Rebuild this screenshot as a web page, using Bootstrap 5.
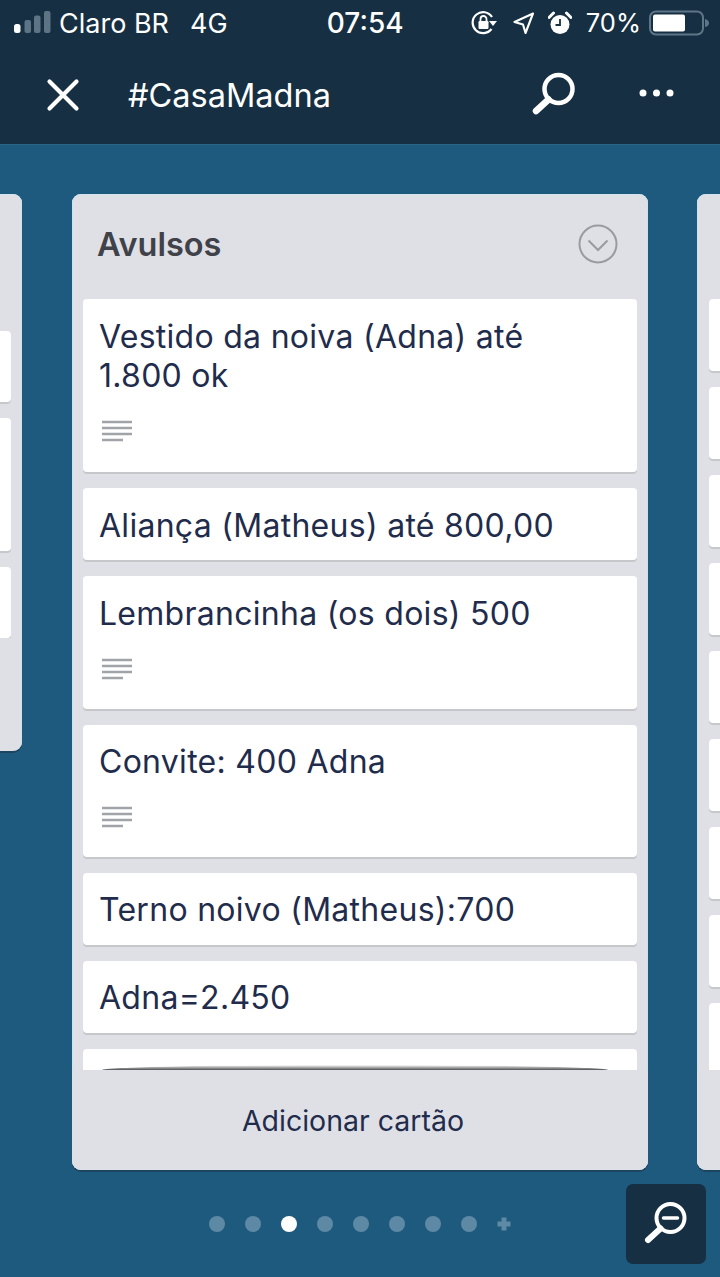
<!DOCTYPE html>
<html lang="pt-BR">
<head>
<meta charset="utf-8">
<title>#CasaMadna</title>
<link href="https://cdn.jsdelivr.net/npm/bootstrap@5.3.0/dist/css/bootstrap.min.css" rel="stylesheet">
<style>
html,body{height:1277px;overflow:hidden}
body{width:720px;background:#1e5a7d;font-family:Inter,"Noto Sans",sans-serif;color:#1f2c4c;position:relative}
.appbar{background:#162f42;height:145px;border-bottom:1px solid #2a6686;color:#fff}
.statusrow{height:46px;font-size:27px;padding-left:14px;line-height:1}
.statusrow svg{display:block;flex:none}
.carrier{margin-left:8px;width:131px}
.clock{font-weight:500;font-size:28px;width:176px}
.st-ico1{margin-right:15px}
.st-ico2{margin-right:14px}
.pct{margin-right:8px;margin-left:14px;font-size:25.5px}
.statusright{margin-right:10px}
.navrow{height:98px}
.xbtn{margin-left:46px;margin-right:48px;flex:none}
.boardname{font-size:32.500px;line-height:1;flex:1 1 auto;margin-top:2px}
.srch{margin-right:63px;margin-bottom:2px;flex:none}
.dotsbtn{margin-right:46px;margin-bottom:4px;flex:none}
.boardarea{margin-top:49px;width:720px;height:978px}
.trelist{flex:none;background:#dfe0e6;overflow:hidden;height:976px;position:relative}
.midlist{width:576px;border-radius:9px;margin-left:50px;margin-right:49px;box-shadow:0 2px 0 #1b4560,inset 1px 0 0 #cfe1ec,inset -1px 0 0 #cfe1ec,inset 0 1px 0 #d3e4ee}
.leftcut{width:22px;height:557px;border-radius:0 9px 9px 0;box-shadow:0 2px 0 #1b4560,inset -1px 0 0 #cfe1ec,inset 0 1px 0 #d3e4ee}
.rightcut{width:23px;border-radius:9px 0 0 9px;box-shadow:0 2px 0 #1b4560,inset 1px 0 0 #cfe1ec,inset 0 1px 0 #d3e4ee}
.listhead{height:105px;padding:0 30px 6px 26px}
.leftcut .listhead{height:137px;padding:0}
.rightcut .listhead{padding:0}
.listtitle{font-size:32.500px;font-weight:600;color:#3f4249;margin:3px 0 0 -1px;line-height:1}
.cardstack{height:771px;overflow:hidden;padding:0 11px;gap:16px}
.leftcut .cardstack{height:auto;padding:0 11px 0 0}
.rightcut .cardstack{padding:0 0 0 12px}
.tcard{background:#fff;border-radius:4px;padding:18px 24px 15px 16px;box-shadow:0 2px 0 #c6c7cb;flex:none;font-size:32px;letter-spacing:.28px;line-height:39px;color:#1f2c4c;min-height:71px}
.midlist .tcard:first-child{padding-bottom:16px}
.midlist .tcard:nth-child(4){padding-top:17px;padding-bottom:15px}
.midlist .tcard:nth-child(n+5){padding-top:17px;padding-bottom:16px}
.leftcut .tcard,.rightcut .tcard{padding:0}
.leftcut .tcard{border-radius:0 4px 4px 0}
.leftcut .tcard.tall{min-height:133px}
.rightcut .tcard{border-radius:4px 0 0 4px;min-height:72px}
.descmark{display:block;margin-top:25px;margin-bottom:14px;margin-left:2px}
.addbar{height:100px;background:#dfe0e6;font-size:28.500px;position:absolute;left:0;right:0;bottom:0;padding:2px 14px 0 0}
.addbar::before{content:"";position:absolute;left:30px;right:40px;top:-5px;height:5px;background:linear-gradient(to bottom,rgba(60,60,60,0),rgba(60,60,60,.9));border-radius:50% 50% 0 0/100% 100% 0 0}
.rightcut .addbar::before{display:none}
.pager{margin-top:44px;gap:20px;height:16px}
.pgdot{width:16px;height:16px;border-radius:50%;background:#5d89a5;flex:none}
.pgdot.on{background:#fff}
.pgplus{width:16px;height:16px;flex:none;margin-left:-1px}
.zoomfab{position:absolute;left:626px;top:1184px;width:80px;height:80px;background:#162f42;border-radius:7px}
</style>
</head>
<body>
<header class="appbar">
  <div class="statusrow d-flex align-items-center">
    <svg width="37" height="24" viewBox="0 0 37 24"><rect x="0" y="13" width="6.5" height="9" rx="2.5" fill="#fff"/><rect x="10.5" y="9" width="6.5" height="13" rx="2" fill="#5d7485"/><rect x="20" y="4.5" width="6.5" height="17.5" rx="2" fill="#5d7485"/><rect x="30" y="0" width="6.5" height="22" rx="2" fill="#5d7485"/></svg>
    <span class="carrier">Claro BR</span>
    <span>4G</span>
    <span class="clock text-end">07:54</span>
    <span class="statusright ms-auto d-flex align-items-center">
      <svg class="st-ico1" width="27" height="24" viewBox="0 0 27 24" fill="none"><path d="M20.5 18A10.5 10.5 0 1 1 21 6" stroke="#fff" stroke-width="2.2"/><path d="M18 10h8l-4 5z" fill="#fff"/><rect x="7.5" y="10" width="10" height="8" rx="1.2" fill="#fff"/><path d="M9.5 10V8a3 3 0 0 1 6 0v2" stroke="#fff" stroke-width="1.8"/></svg>
      <svg class="st-ico2" width="21" height="22" viewBox="0 0 21 22" fill="none"><path d="M20 1.5 1.5 10l8.5 2.5 2.5 8.5z" stroke="#fff" stroke-width="2.1" stroke-linejoin="round"/></svg>
      <svg width="24" height="24" viewBox="0 0 24 24"><circle cx="12" cy="13.5" r="9.5" fill="#fff"/><path d="M12 8v6H7.5" stroke="#162f42" stroke-width="1.8" fill="none"/><path d="M1 6.5 5.5 2M23 6.5 18.500 2" stroke="#fff" stroke-width="3" stroke-linecap="round"/></svg>
      <span class="pct">70%</span>
      <svg width="61" height="26" viewBox="0 0 61 26"><rect x="1" y="1.500" width="53" height="23" rx="6" fill="none" stroke="#5f7688" stroke-width="2"/><rect x="4" y="4.500" width="32" height="17" rx="2" fill="#fff"/><path d="M56 9c3 .5 4 2.500 4 4s-1 3.500-4 4z" fill="#5f7688"/></svg>
    </span>
  </div>
  <div class="navrow d-flex align-items-center">
    <svg class="xbtn" width="34" height="34" viewBox="0 0 34 34"><path d="M3.500 3.500 30.500 30.500M30.500 3.500 3.500 30.500" stroke="#fff" stroke-width="4.200" stroke-linecap="round"/></svg>
    <span class="boardname">#CasaMadna</span>
    <svg class="srch" width="44" height="44" viewBox="0 0 44 44" fill="none"><circle cx="26.500" cy="17" r="14" stroke="#fff" stroke-width="4.500"/><path d="M16.500 27.500 4 39" stroke="#fff" stroke-width="6.500" stroke-linecap="round"/></svg>
    <svg class="dotsbtn" width="35" height="8" viewBox="0 0 35 8"><circle cx="4" cy="4" r="3.500" fill="#fff"/><circle cx="17.500" cy="4" r="3.500" fill="#fff"/><circle cx="31" cy="4" r="3.500" fill="#fff"/></svg>
  </div>
</header>

<main class="boardarea d-flex align-items-start">
  <section class="trelist leftcut">
    <div class="listhead"></div>
    <div class="cardstack d-flex flex-column">
      <div class="tcard"></div>
      <div class="tcard tall"></div>
      <div class="tcard"></div>
    </div>
  </section>

  <section class="trelist midlist">
    <div class="listhead d-flex align-items-center justify-content-between">
      <h2 class="listtitle">Avulsos</h2>
      <svg width="40" height="40" viewBox="0 0 40 40" fill="none"><circle cx="20" cy="20" r="18.500" stroke="#9a9ba0" stroke-width="2"/><path d="M10.500 16.500 20 26l9.500-9.500" stroke="#9a9ba0" stroke-width="2"/></svg>
    </div>
    <div class="cardstack d-flex flex-column">
      <div class="tcard">Vestido da noiva (Adna) até 1.800 ok
        <svg class="descmark" width="32" height="22" viewBox="0 0 32 22"><path d="M1 2h30M1 8h30M1 14h30M1 20h21" stroke="#a0a3a7" stroke-width="2.400"/></svg></div>
      <div class="tcard">Aliança (Matheus) até 800,00</div>
      <div class="tcard">Lembrancinha (os dois) 500
        <svg class="descmark" width="32" height="22" viewBox="0 0 32 22"><path d="M1 2h30M1 8h30M1 14h30M1 20h21" stroke="#a0a3a7" stroke-width="2.400"/></svg></div>
      <div class="tcard">Convite: 400 Adna
        <svg class="descmark" width="32" height="22" viewBox="0 0 32 22"><path d="M1 2h30M1 8h30M1 14h30M1 20h21" stroke="#a0a3a7" stroke-width="2.400"/></svg></div>
      <div class="tcard">Terno noivo (Matheus):700</div>
      <div class="tcard">Adna=2.450</div>
      <div class="tcard"></div>
    </div>
    <div class="addbar d-flex align-items-center justify-content-center">Adicionar cartão</div>
  </section>

  <section class="trelist rightcut">
    <div class="listhead"></div>
    <div class="cardstack d-flex flex-column">
      <div class="tcard"></div><div class="tcard"></div><div class="tcard"></div>
      <div class="tcard"></div><div class="tcard"></div><div class="tcard"></div>
      <div class="tcard"></div><div class="tcard"></div><div class="tcard"></div>
    </div>
    <div class="addbar"></div>
  </section>
</main>

<nav class="pager d-flex justify-content-center align-items-center">
  <span class="pgdot"></span><span class="pgdot"></span><span class="pgdot on"></span><span class="pgdot"></span><span class="pgdot"></span><span class="pgdot"></span><span class="pgdot"></span><span class="pgdot"></span>
  <svg class="pgplus" width="16" height="16" viewBox="0 0 16 16"><path d="M8 1.500v13M1.500 8h13" stroke="#5d89a5" stroke-width="5"/></svg>
</nav>

<div class="zoomfab d-flex align-items-center justify-content-center">
  <svg width="44" height="44" viewBox="0 0 44 44" fill="none"><circle cx="26.500" cy="16" r="14" stroke="#fff" stroke-width="4"/><path d="M19.500 16h14" stroke="#fff" stroke-width="3.500" stroke-linecap="round"/><path d="M16.500 26.500 4 38" stroke="#fff" stroke-width="6" stroke-linecap="round"/></svg>
</div>
</body>
</html>
